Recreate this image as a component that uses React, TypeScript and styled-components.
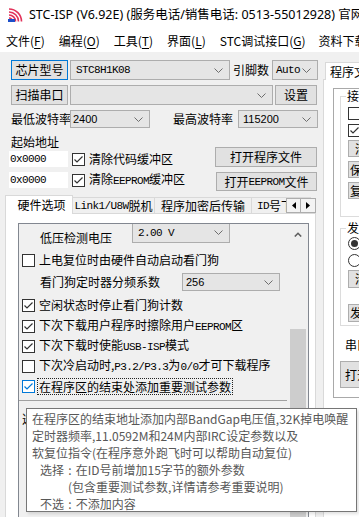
import React from "react";
import styled, { createGlobalStyle } from "styled-components";

const GlobalStyle = createGlobalStyle`
  html, body { margin: 0; padding: 0; background: #f0f0f0; }
  #root { width: 359px; height: 517px; }
`;

const UI = `"Noto Sans CJK SC", "Noto Sans", sans-serif`;

const Window = styled.div`
  position: relative;
  width: 359px;
  height: 517px;
  overflow: hidden;
  display: flex;
  flex-direction: column;
  background: #f0f0f0;
  color: #000;
  font-family: ${UI};
  font-size: 12px;
  line-height: 16px;
`;

const TitleBar = styled.div`
  flex: none;
  height: 30px;
  display: flex;
  align-items: center;
  gap: 6px;
  padding-left: 7px;
  background: #fff;
  white-space: nowrap;
  font-family: "Noto Sans", "Noto Sans CJK SC", sans-serif;
  font-size: 12.5px;
`;

const IconBox = styled.span`
  flex: none;
  width: 16px;
  height: 16px;
  display: flex;
`;

const MenuBar = styled.div`
  flex: none;
  height: 22px;
  display: flex;
  align-items: center;
  padding-left: 6px;
  background: #fff;
  white-space: nowrap;

  & u {
    text-underline-offset: 2px;
  }
`;

const MenuItem = styled.span<{ $ml?: number }>`
  flex: none;
  margin-left: ${(p) => p.$ml ?? 0}px;
`;

const Body = styled.div`
  flex: 1;
  display: flex;
  min-height: 0;
`;

const LeftCol = styled.div`
  width: 320px;
  flex: none;
  display: flex;
  flex-direction: column;
`;

const Row = styled.div<{ $mt: number; $h: number }>`
  flex: none;
  display: flex;
  align-items: center;
  height: ${(p) => p.$h}px;
  margin-top: ${(p) => p.$mt}px;
  padding-left: 11px;
  white-space: nowrap;
`;

const Button = styled.button<{ $w: number; $h: number; $focus?: boolean; $ml?: number }>`
  box-sizing: border-box;
  flex: none;
  width: ${(p) => p.$w}px;
  height: ${(p) => p.$h}px;
  margin: 0 0 0 ${(p) => p.$ml ?? 0}px;
  padding: 0;
  border: 1px solid ${(p) => (p.$focus ? "#0078d7" : "#adadad")};
  background: #e1e1e1;
  color: #000;
  font: inherit;
  display: flex;
  align-items: center;
  justify-content: center;
  white-space: nowrap;
`;

const Combo = styled.div<{ $w: number; $h: number; $ml?: number; $pl?: number }>`
  box-sizing: border-box;
  flex: none;
  width: ${(p) => p.$w}px;
  height: ${(p) => p.$h}px;
  margin-left: ${(p) => p.$ml ?? 0}px;
  padding: 0 6px 0 ${(p) => p.$pl ?? 4}px;
  border: 1px solid #adadad;
  background: #e5e5e5;
  display: flex;
  align-items: center;
  justify-content: space-between;
  overflow: hidden;
`;

const Label = styled.span<{ $w?: number; $ml?: number }>`
  flex: none;
  width: ${(p) => (p.$w ? `${p.$w}px` : "auto")};
  margin-left: ${(p) => p.$ml ?? 0}px;
  white-space: nowrap;
`;

const Asc = styled.span`
  font-family: "Liberation Mono", monospace;
  font-size: 11px;
  letter-spacing: -0.6px;
`;

const Num = styled.span`
  font-family: "Liberation Sans", sans-serif;
  font-size: 11px;
`;

const FileArea = styled.div`
  flex: none;
  display: flex;
  margin-top: 6px;
  padding: 0 3px 0 9px;
`;

const FileLeft = styled.div`
  display: flex;
  flex-direction: column;
`;

const FileRight = styled.div`
  margin-left: auto;
  padding-top: 13px;
  display: flex;
  flex-direction: column;
  align-items: flex-end;
  gap: 5px;
`;

const AddrLabel = styled.div`
  height: 16px;
  padding-left: 2px;
`;

const InputRow = styled.div<{ $mt: number }>`
  display: flex;
  align-items: center;
  height: 18px;
  margin-top: ${(p) => p.$mt}px;
  white-space: nowrap;
`;

const Edit = styled.div`
  box-sizing: border-box;
  width: 59px;
  height: 16px;
  background: #fff;
  padding-left: 1px;
  display: flex;
  align-items: center;
`;

const CheckWrap = styled.span<{ $ml?: number }>`
  display: inline-flex;
  align-items: center;
  margin-left: ${(p) => p.$ml ?? 0}px;
  white-space: nowrap;
`;

const Box = styled.span<{ $focus?: boolean }>`
  box-sizing: border-box;
  flex: none;
  width: 13px;
  height: 13px;
  border: 1px solid ${(p) => (p.$focus ? "#0078d7" : "#333")};
  background: #fff;
  display: inline-flex;
  align-items: center;
  justify-content: center;
`;

const CheckText = styled.span<{ $focus?: boolean }>`
  margin-left: ${(p) => (p.$focus ? 2 : 4)}px;
  padding: 0 ${(p) => (p.$focus ? 1 : 0)}px;
  border: ${(p) => (p.$focus ? "1px dotted #222" : "none")};
  line-height: ${(p) => (p.$focus ? 15 : 16)}px;
`;

const RadioDot = styled.span<{ $on?: boolean }>`
  box-sizing: border-box;
  flex: none;
  width: 13px;
  height: 13px;
  border-radius: 50%;
  border: 1px solid #333;
  background: #fff;
  display: inline-flex;
  align-items: center;
  justify-content: center;

  &::after {
    content: "";
    width: 7px;
    height: 7px;
    border-radius: 50%;
    background: ${(p) => (p.$on ? "#333" : "transparent")};
  }
`;

const TabStrip = styled.div`
  position: relative;
  z-index: 1;
  flex: none;
  width: 311px;
  height: 20px;
  margin: 2px 0 0 5px;
  display: flex;
  align-items: flex-end;
`;

const Tab = styled.div<{ $w: number; $active?: boolean }>`
  box-sizing: border-box;
  flex: none;
  width: ${(p) => p.$w}px;
  height: ${(p) => (p.$active ? 19 : 16)}px;
  margin: 0 0 ${(p) => (p.$active ? -1 : 0)}px ${(p) => (p.$active ? 0 : -1)}px;
  border: 1px solid #d9d9d9;
  border-bottom: none;
  background: ${(p) => (p.$active ? "#fff" : "#f0f0f0")};
  padding-left: ${(p) => (p.$active ? 5 : 0)}px;
  display: flex;
  align-items: center;
  justify-content: center;
  white-space: nowrap;
  overflow: hidden;
`;

const TabArrows = styled.div`
  position: absolute;
  right: 0;
  bottom: 0;
  display: flex;
`;

const ArrowBtn = styled.div`
  box-sizing: border-box;
  width: 15px;
  height: 15px;
  border: 1px solid #adadad;
  background: #f3f3f3;
  display: flex;
  align-items: center;
  justify-content: center;

  & + & {
    border-left: none;
  }
`;

const TabPanel = styled.div`
  flex: 1;
  min-height: 0;
  box-sizing: border-box;
  width: 311px;
  margin-left: 5px;
  border: 1px solid #d9d9d9;
  border-bottom: none;
  background: #fff;
  padding: 9px 6px 0 12px;
  display: flex;
  flex-direction: column;
`;

const ListBox = styled.div`
  flex: 1;
  min-height: 0;
  border: 1px solid #828790;
  border-bottom: none;
  background: #f0f0f0;
  display: flex;
  overflow: hidden;
`;

const ListContent = styled.div`
  flex: 1;
  min-width: 0;
  display: flex;
  flex-direction: column;
  padding-left: 3px;
  overflow: hidden;
`;

const ListRow = styled.div<{ $h: number; $mt?: number; $pl?: number; $top?: boolean }>`
  flex: none;
  display: flex;
  align-items: ${(p) => (p.$top ? "flex-start" : "center")};
  height: ${(p) => p.$h}px;
  margin-top: ${(p) => p.$mt ?? 0}px;
  padding-left: ${(p) => p.$pl ?? 0}px;
  white-space: nowrap;
`;

const TopLabel = styled.span<{ $w: number }>`
  flex: none;
  width: ${(p) => p.$w}px;
  margin-top: 7px;
  line-height: 17px;
`;

const Separator = styled.div`
  flex: none;
  height: 1px;
  margin: 4px 2px 0 -3px;
  background: #a0a0a0;
`;

const HiddenText = styled.div`
  margin-top: 9px;
  line-height: 17px;
  white-space: nowrap;
`;

const ScrollBar = styled.div`
  flex: none;
  width: 17px;
  margin-right: 2px;
  display: flex;
  flex-direction: column;
  align-items: center;
`;

const ScrollUp = styled.div`
  flex: none;
  height: 20px;
  display: flex;
  align-items: center;
  justify-content: center;
`;

const Thumb = styled.div`
  flex: 1;
  width: 16px;
  margin-top: 85px;
  background: #cdcdcd;
`;

const RightCol = styled.div`
  flex: 1;
  min-width: 0;
  overflow: hidden;
  padding: 10px 0 0 3px;
  display: flex;
  flex-direction: column;
`;

const RTab = styled.div`
  position: relative;
  z-index: 1;
  flex: none;
  box-sizing: border-box;
  width: 70px;
  height: 18px;
  margin: 0 0 -1px 2px;
  border: 1px solid #d9d9d9;
  border-bottom: none;
  background: #fff;
  padding-left: 4px;
  display: flex;
  align-items: center;
  white-space: nowrap;
`;

const RBody = styled.div`
  flex: 1;
  box-sizing: border-box;
  width: 90px;
  border: 1px solid #d9d9d9;
  border-bottom: none;
  background: #fff;
  padding: 8px 0 0 9px;
`;

const Frame = styled.div`
  box-sizing: border-box;
  width: 90px;
  height: 310px;
  border: 1px solid #a9a9a9;
  border-right: none;
  padding-left: 6px;
`;

const Group = styled.fieldset<{ $mt: number; $pb: number }>`
  box-sizing: border-box;
  width: 90px;
  min-width: 0;
  margin: ${(p) => p.$mt}px 0 0 0;
  padding: 0 0 ${(p) => p.$pb}px 7px;
  border: 1px solid #dcdcdc;
  border-right: none;
`;

const Legend = styled.legend`
  margin-left: -2px;
  padding: 0 1px;
  font-size: 12px;
  line-height: 12px;
`;

const GroupItem = styled.div<{ $mt: number }>`
  display: flex;
  align-items: center;
  height: 13px;
  margin-top: ${(p) => p.$mt}px;
  white-space: nowrap;
`;

const SideButton = styled.button<{ $h: number; $mt: number; $pl: number }>`
  display: block;
  box-sizing: border-box;
  width: 80px;
  height: ${(p) => p.$h}px;
  margin: ${(p) => p.$mt}px 0 0 0;
  padding: 0 0 0 ${(p) => p.$pl}px;
  border: 1px solid #adadad;
  background: #e1e1e1;
  color: #000;
  font: inherit;
  text-align: left;
  white-space: nowrap;
`;

const SideLabel = styled.div`
  margin: 11px 0 0 5px;
  line-height: 16px;
  white-space: nowrap;
`;

const Tooltip = styled.div`
  position: absolute;
  left: 26px;
  top: 408px;
  width: 331px;
  height: 104px;
  box-sizing: border-box;
  border: 1px solid #767676;
  background: #fff;
  color: #575757;
  font-size: 12px;
  line-height: 17px;
  padding: 1px 0 0 5px;
  white-space: nowrap;
  box-shadow: 2px 2px 3px rgba(0, 0, 0, 0.12);
`;

const TipLine = styled.div<{ $indent?: number }>`
  padding-left: ${(p) => p.$indent ?? 0}px;
  white-space: pre;
  word-spacing: 1.5px;
`;

const Chevron = () => (
  <svg width="9" height="5" viewBox="0 0 9 5">
    <polyline points="0.5,0.5 4.5,4.5 8.5,0.5" fill="none" stroke="#6d6d6d" strokeWidth="1" />
  </svg>
);

const Check = ({ on, focus }: { on?: boolean; focus?: boolean }) => (
  <Box $focus={focus}>
    {on && (
      <svg width="11" height="11" viewBox="0 0 11 11">
        <polyline
          points="1.5,5.5 4,8 9.5,2.5"
          fill="none"
          stroke={focus ? "#0078d7" : "#333"}
          strokeWidth="1.2"
        />
      </svg>
    )}
  </Box>
);

const CheckItem = ({ on, focus, ml, children }: { on?: boolean; focus?: boolean; ml?: number; children: React.ReactNode }) => (
  <CheckWrap $ml={ml}>
    <Check on={on} focus={focus} />
    <CheckText $focus={focus}>{children}</CheckText>
  </CheckWrap>
);

const AppIcon = () => (
  <IconBox>
    <svg width="16" height="16" viewBox="0 0 16 16">
      {[3.5, 6.5, 9.5, 12.5].map((r) => (
        <path
          key={r}
          d={`M 2 ${14.5 - r} A ${r} ${r} 0 0 1 ${2 + r} 14.5`}
          fill="none"
          stroke="#e2325a"
          strokeWidth="1.6"
        />
      ))}
      <rect x="1" y="12" width="7" height="3" fill="#1c4fc9" />
    </svg>
  </IconBox>
);

function App() {
  return (
    <Window>
      <GlobalStyle />
      <TitleBar>
        <AppIcon />
        <span>STC-ISP (V6.92E) (服务电话/销售电话: 0513-55012928) 官网</span>
      </TitleBar>
      <MenuBar>
        <MenuItem>文件(<u>F</u>)</MenuItem>
        <MenuItem $ml={14}>编程(<u>O</u>)</MenuItem>
        <MenuItem $ml={14}>工具(<u>T</u>)</MenuItem>
        <MenuItem $ml={14}>界面(<u>L</u>)</MenuItem>
        <MenuItem $ml={14}>STC调试接口(<u>G</u>)</MenuItem>
        <MenuItem $ml={13}>资料下载</MenuItem>
      </MenuBar>

      <Body>
        <LeftCol>
          <Row $mt={8} $h={20}>
            <Button $w={57} $h={20} $focus>芯片型号</Button>
            <Combo $w={160} $h={20} $ml={2} $pl={5}>
              <Asc>STC8H1K08</Asc>
              <Chevron />
            </Combo>
            <Label $ml={3} $w={36}>引脚数</Label>
            <Combo $w={46} $h={20} $ml={3} $pl={3}>
              <Asc>Auto</Asc>
              <Chevron />
            </Combo>
          </Row>

          <Row $mt={5} $h={20}>
            <Button $w={57} $h={20}>扫描串口</Button>
            <Combo $w={203} $h={20} $ml={2}>
              <span />
              <Chevron />
            </Combo>
            <Button $w={42} $h={20} $ml={2}>设置</Button>
          </Row>

          <Row $mt={5} $h={18}>
            <Label $w={59}>最低波特率</Label>
            <Combo $w={80} $h={18} $pl={2}>
              <Num>2400</Num>
              <Chevron />
            </Combo>
            <Label $ml={23} $w={65}>最高波特率</Label>
            <Combo $w={80} $h={18} $pl={4}>
              <Num>115200</Num>
              <Chevron />
            </Combo>
          </Row>

          <FileArea>
            <FileLeft>
              <AddrLabel>起始地址</AddrLabel>
              <InputRow $mt={0}>
                <Edit><Asc>0x0000</Asc></Edit>
                <CheckItem on ml={4}>清除代码缓冲区</CheckItem>
              </InputRow>
              <InputRow $mt={3}>
                <Edit><Asc>0x0000</Asc></Edit>
                <CheckItem on ml={4}>清除<Asc>EEPROM</Asc>缓冲区</CheckItem>
              </InputRow>
            </FileLeft>
            <FileRight>
              <Button $w={102} $h={20}>打开程序文件</Button>
              <Button $w={101} $h={19}>打开<Asc>EEPROM</Asc>文件</Button>
            </FileRight>
          </FileArea>

          <TabStrip>
            <Tab $w={68} $active>硬件选项</Tab>
            <Tab $w={83}><Asc>Link1/U8W</Asc>脱机</Tab>
            <Tab $w={98}>程序加密后传输</Tab>
            <Tab $w={60}><Asc>ID</Asc>号下载</Tab>
            <TabArrows>
              <ArrowBtn>
                <svg width="4" height="7" viewBox="0 0 4 7"><polygon points="4,0 0,3.5 4,7" fill="#000" /></svg>
              </ArrowBtn>
              <ArrowBtn>
                <svg width="4" height="7" viewBox="0 0 4 7"><polygon points="0,0 4,3.5 0,7" fill="#000" /></svg>
              </ArrowBtn>
            </TabArrows>
          </TabStrip>

          <TabPanel>
            <ListBox>
              <ListContent>
                <ListRow $h={28} $mt={-2} $pl={18} $top>
                  <TopLabel $w={92}>低压检测电压</TopLabel>
                  <Combo $w={98} $h={21} $pl={5}>
                    <Asc>2.00 V</Asc>
                    <Chevron />
                  </Combo>
                </ListRow>
                <ListRow $h={20}>
                  <CheckItem>上电复位时由硬件自动启动看门狗</CheckItem>
                </ListRow>
                <ListRow $h={24} $pl={18}>
                  <Label $w={142}>看门狗定时器分频系数</Label>
                  <Combo $w={98} $h={18} $pl={3}>
                    <Num>256</Num>
                    <Chevron />
                  </Combo>
                </ListRow>
                <ListRow $h={22}>
                  <CheckItem on>空闲状态时停止看门狗计数</CheckItem>
                </ListRow>
                <ListRow $h={20}>
                  <CheckItem on>下次下载用户程序时擦除用户<Asc>EEPROM</Asc>区</CheckItem>
                </ListRow>
                <ListRow $h={20}>
                  <CheckItem on>下次下载时使能<Asc>USB-ISP</Asc>模式</CheckItem>
                </ListRow>
                <ListRow $h={20}>
                  <CheckItem>下次冷启动时,<Asc>P3.2/P3.3</Asc>为<Asc>0/0</Asc>才可下载程序</CheckItem>
                </ListRow>
                <ListRow $h={20}>
                  <CheckItem on focus>在程序区的结束处添加重要测试参数</CheckItem>
                </ListRow>
                <Separator />
                <HiddenText>选</HiddenText>
              </ListContent>
              <ScrollBar>
                <ScrollUp>
                  <svg width="8" height="5" viewBox="0 0 8 5">
                    <polyline points="0.8,4.5 4,1.3 7.2,4.5" fill="none" stroke="#606060" strokeWidth="1.6" />
                  </svg>
                </ScrollUp>
                <Thumb />
              </ScrollBar>
            </ListBox>
          </TabPanel>
        </LeftCol>

        <RightCol>
          <RTab>程序文件</RTab>
          <RBody>
            <Frame>
              <Group $mt={1} $pb={17}>
                <Legend>接收缓冲区</Legend>
                <GroupItem $mt={5}><Check /><CheckText>文本模式</CheckText></GroupItem>
                <GroupItem $mt={4}><Check on /><CheckText>HEX模式</CheckText></GroupItem>
                <SideButton $h={17} $mt={3} $pl={6}>清空接收区</SideButton>
                <SideButton $h={17} $mt={4} $pl={1}>保存接收数据</SideButton>
                <SideButton $h={17} $mt={4} $pl={1}>复制接收数据</SideButton>
              </Group>
              <Group $mt={5} $pb={3}>
                <Legend>发送缓冲区</Legend>
                <GroupItem $mt={3}><RadioDot $on /><CheckText>文本模式</CheckText></GroupItem>
                <GroupItem $mt={4}><RadioDot /><CheckText>HEX模式</CheckText></GroupItem>
                <SideButton $h={18} $mt={3} $pl={6}>清空发送区</SideButton>
                <SideButton $h={18} $mt={16} $pl={1}>发送文件</SideButton>
              </Group>
              <SideLabel>串口</SideLabel>
              <SideButton $h={27} $mt={8} $pl={4}>打开串口</SideButton>
            </Frame>
          </RBody>
        </RightCol>
      </Body>

      <Tooltip>
        <TipLine>在程序区的结束地址添加内部BandGap电压值,32K掉电唤醒</TipLine>
        <TipLine>定时器频率,11.0592M和24M内部IRC设定参数以及</TipLine>
        <TipLine>软复位指令(在程序意外跑飞时可以帮助自动复位)</TipLine>
        <TipLine $indent={8}>选择 : 在ID号前增加15字节的额外参数</TipLine>
        <TipLine $indent={36}>(包含重要测试参数,详情请参考重要说明)</TipLine>
        <TipLine $indent={8}>不选 : 不添加内容</TipLine>
      </Tooltip>
    </Window>
  );
}

export default App;
